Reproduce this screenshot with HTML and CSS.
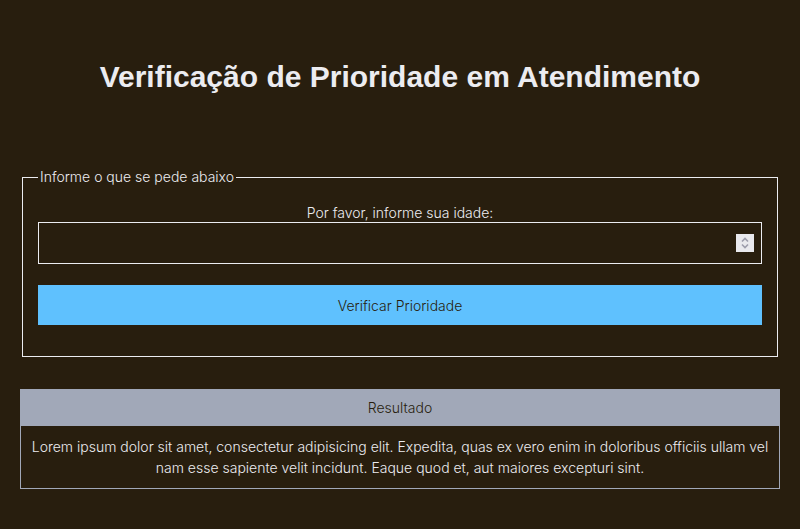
FILE: index.html
```html
<!DOCTYPE html>
<html lang="pt-BR">
<head>
<meta charset="utf-8">
<title>Verificação de Prioridade</title>
<link rel="stylesheet" href="styles.css">
</head>
<body>
<main class="page">
  <h1 class="title">Verificação de Prioridade em Atendimento</h1>
  <fieldset class="form-box">
    <legend class="legend">Informe o que se pede abaixo</legend>
    <label class="label" for="idade">Por favor, informe sua idade:</label>
    <div class="input-wrap">
      <input class="input" id="idade" type="number">
      <span class="spin" aria-hidden="true">
        <svg width="18" height="18" viewBox="0 0 18 18"><rect width="18" height="18" fill="#e9e9ed"/><path d="M6 7.5 L9 4.5 L12 7.5" fill="none" stroke="#9d9dab" stroke-width="1.6"/><path d="M6 10.5 L9 13.5 L12 10.5" fill="none" stroke="#9d9dab" stroke-width="1.6"/></svg>
      </span>
    </div>
    <button class="button" type="button">Verificar Prioridade</button>
  </fieldset>
  <section class="result">
    <div class="result-head">Resultado</div>
    <p class="result-body">Lorem ipsum dolor sit amet, consectetur adipisicing elit. Expedita, quas ex vero enim in doloribus officiis ullam vel nam esse sapiente velit incidunt. Eaque quod et, aut maiores excepturi sint.</p>
  </section>
</main>
</body>
</html>
```
FILE: styles.css
```css
* { box-sizing: border-box; }
html, body { margin: 0; padding: 0; }
body {
  background: #281e0e;
  color: #ececf0;
  font-family: Inter, "Liberation Sans", sans-serif;
  font-weight: 300;
  font-size: 14px;
}
.page {
  padding: 0 20px;
  display: flex;
  flex-direction: column;
}
.title {
  font-family: "Liberation Sans", Arial, sans-serif;
  font-weight: 700;
  font-size: 30px;
  text-align: center;
  margin: 60px 0 0;
  line-height: 34px;
  color: #ececf0;
}
.form-box {
  margin: 75px 2px 0;
  border: 1px solid #ececf0;
  padding: 20px 15px 31px;
  display: flex;
  flex-direction: column;
  text-align: center;
}
.legend {
  padding: 0 2px;
  margin-left: 0;
  margin-right: auto;
  font-size: 14px;
  line-height: 16px;
  text-align: left;
}
.label {
  display: block;
  line-height: 16px;
  margin-bottom: 1px;
}
.input-wrap { position: relative; }
.input {
  display: block;
  width: 100%;
  height: 42px;
  background: transparent;
  border: 1px solid #ececf0;
  color: #ececf0;
  -moz-appearance: textfield;
  appearance: textfield;
}
.input::-webkit-inner-spin-button,
.input::-webkit-outer-spin-button { -webkit-appearance: none; margin: 0; }
.spin {
  position: absolute;
  right: 8px;
  top: 12px;
  width: 18px;
  height: 18px;
  display: block;
}
.spin svg { display: block; }
.button {
  margin-top: 21px;
  height: 40px;
  width: 100%;
  background: #5fc1fe;
  border: none;
  color: #281e0e;
  font-family: Inter, "Liberation Sans", sans-serif;
  font-weight: 300;
  font-size: 14px;
}
.result {
  margin-top: 32px;
  border: 1px solid #a1a8b8;
}
.result-head {
  background: #a1a8b8;
  color: #281e0e;
  text-align: center;
  height: 36px;
  line-height: 36px;
}
.result-body {
  margin: 0;
  padding: 10px 6px 10px;
  text-align: center;
  line-height: 21px;
}
```
